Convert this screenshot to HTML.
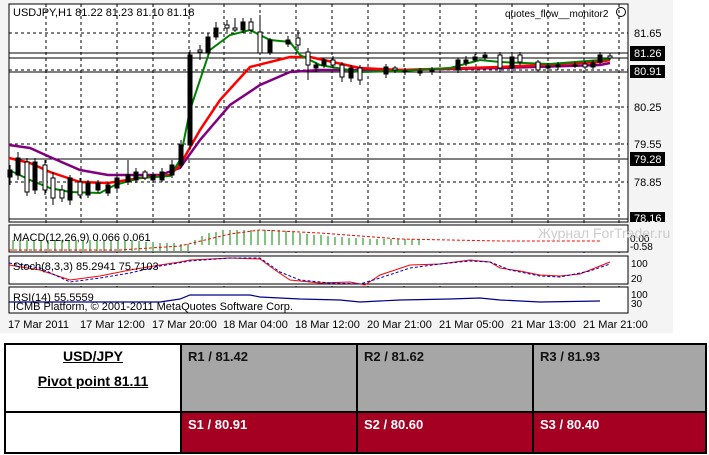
<!DOCTYPE html><html><head><meta charset="utf-8"><style>
body{margin:0;width:709px;height:455px;background:#fff;overflow:hidden;font-family:"Liberation Sans",sans-serif;position:relative}
svg text{font-family:"Liberation Sans",sans-serif}
table{position:absolute;left:4px;top:343px;border-collapse:collapse;width:703px}
td{border:2px solid #000;vertical-align:top;font-weight:bold;font-size:13px;padding:4px 6px;}
.g{background:#a6a6a6;color:#111}.r{background:#a50021;color:#fff}
</style></head><body>
<svg width="709" height="340" style="position:absolute;left:0;top:0" xmlns="http://www.w3.org/2000/svg">
<rect x="0" y="0" width="673" height="333" fill="#f4f4f4"/>
<rect x="9" y="4" width="619" height="218" fill="#fff"/>
<g stroke="#000" stroke-dasharray="3,3" stroke-width="1">
<line x1="46" y1="4" x2="46" y2="313"/><line x1="81" y1="4" x2="81" y2="313"/><line x1="117" y1="4" x2="117" y2="313"/><line x1="153" y1="4" x2="153" y2="313"/><line x1="189" y1="4" x2="189" y2="313"/><line x1="224" y1="4" x2="224" y2="313"/><line x1="260" y1="4" x2="260" y2="313"/><line x1="296" y1="4" x2="296" y2="313"/><line x1="332" y1="4" x2="332" y2="313"/><line x1="368" y1="4" x2="368" y2="313"/><line x1="404" y1="4" x2="404" y2="313"/><line x1="440" y1="4" x2="440" y2="313"/><line x1="476" y1="4" x2="476" y2="313"/><line x1="512" y1="4" x2="512" y2="313"/><line x1="548" y1="4" x2="548" y2="313"/><line x1="584" y1="4" x2="584" y2="313"/><line x1="619" y1="4" x2="619" y2="313"/>
<line x1="9" y1="33" x2="628" y2="33"/><line x1="9" y1="70" x2="628" y2="70"/><line x1="9" y1="107" x2="628" y2="107"/><line x1="9" y1="144" x2="628" y2="144"/><line x1="9" y1="182" x2="628" y2="182"/>
</g>
<g stroke="#000" fill="none"><rect x="9" y="4" width="619" height="218"/>
<line x1="9" y1="53" x2="628" y2="53"/><line x1="9" y1="58" x2="628" y2="58"/><line x1="9" y1="72" x2="628" y2="72"/><line x1="9" y1="159" x2="628" y2="159"/><line x1="9" y1="219" x2="628" y2="219"/></g>
<polyline fill="none" stroke="#800080" stroke-width="2.5" points="9,145 30,148 50,157 80,170 108,175 160,175 180,168 200,140 230,105 260,85 290,72 320,70 400,70 500,68 600,65 610,63"/>
<polyline fill="none" stroke="#f00" stroke-width="2.5" points="9,158 30,163 50,172 80,182 108,183 140,178 170,175 180,165 200,130 220,100 250,67 290,57 310,57 360,68 400,70 500,67 600,62 610,60"/>
<polyline fill="none" stroke="#008000" stroke-width="2" points="9,170 30,180 50,188 70,192 100,193 115,185 140,178 170,176 180,160 190,110 210,50 230,35 250,30 270,40 290,42 300,55 320,65 360,72 400,71 450,68 480,60 500,62 550,64 600,60 610,59"/>
<g stroke="#000" stroke-width="1">
<path d="M10 165V185M18 152V180M27 158V196M35 158V194M45 160V195M53 172V205M62 185V202M70 175V205M80 178V198M88 180V198M98 180V193M108 182V196M117 175V190M128 160V185M136 168V183M145 170V180M153 172V183M162 168V182M172 160V178M181 140V168M190 50V150M200 45V60M208 33V55M216 22V40M227 20V32M235 18V32M243 18V33M251 18V32M260 15V55M270 38V55M288 36V47M298 30V50M308 48V80M316 62V72M324 58V68M333 56V68M342 62V82M351 65V82M360 65V85M386 64V78M395 66V73M405 68V75M420 68V76M432 67V75M458 58V73M466 56V66M475 54V62M485 52V60M500 52V72M512 54V72M520 52V65M538 60V72M548 63V71M558 62V70M575 62V68M585 61V69M593 60V69M600 52V64M610 53V60"/>
</g>
<g stroke="#000" stroke-width="1" fill="#000">
<rect x="8" y="170" width="4" height="7"/><rect x="16" y="158" width="4" height="17"/><rect x="33" y="162" width="4" height="28"/><rect x="68" y="178" width="4" height="22"/><rect x="86" y="183" width="4" height="12"/><rect x="96" y="183" width="4" height="7"/><rect x="106" y="185" width="4" height="8"/><rect x="115" y="178" width="4" height="10"/><rect x="126" y="175" width="4" height="7"/><rect x="134" y="172" width="4" height="8"/><rect x="151" y="175" width="4" height="5"/><rect x="160" y="172" width="4" height="8"/><rect x="170" y="165" width="4" height="10"/><rect x="179" y="145" width="4" height="20"/><rect x="188" y="55" width="4" height="90"/><rect x="206" y="37" width="4" height="16"/><rect x="214" y="28" width="4" height="9"/><rect x="241" y="22" width="4" height="8"/><rect x="268" y="40" width="4" height="13"/><rect x="286" y="40" width="4" height="4"/><rect x="314" y="65" width="4" height="3"/><rect x="322" y="60" width="4" height="5"/><rect x="349" y="68" width="4" height="10"/><rect x="384" y="67" width="4" height="7"/><rect x="403" y="71" width="4" height="1"/><rect x="418" y="71" width="4" height="2"/><rect x="430" y="70" width="4" height="2"/><rect x="456" y="60" width="4" height="10"/><rect x="464" y="60" width="4" height="3"/><rect x="473" y="57" width="4" height="3"/><rect x="483" y="55" width="4" height="3"/><rect x="510" y="57" width="4" height="11"/><rect x="546" y="66" width="4" height="2"/><rect x="556" y="65" width="4" height="2"/><rect x="573" y="65" width="4" height="1"/><rect x="591" y="63" width="4" height="4"/><rect x="598" y="55" width="4" height="7"/>
</g>
<g stroke="#000" stroke-width="1" fill="#fff">
<rect x="25" y="162" width="4" height="30"/><rect x="43" y="165" width="4" height="25"/><rect x="51" y="178" width="4" height="20"/><rect x="60" y="190" width="4" height="8"/><rect x="78" y="182" width="4" height="13"/><rect x="143" y="172" width="4" height="6"/><rect x="198" y="50" width="4" height="2"/><rect x="225" y="25" width="4" height="3"/><rect x="233" y="28" width="4" height="2"/><rect x="249" y="22" width="4" height="8"/><rect x="258" y="32" width="4" height="21"/><rect x="296" y="38" width="4" height="7"/><rect x="306" y="52" width="4" height="13"/><rect x="331" y="60" width="4" height="5"/><rect x="340" y="65" width="4" height="12"/><rect x="358" y="68" width="4" height="12"/><rect x="393" y="68" width="4" height="2"/><rect x="498" y="55" width="4" height="13"/><rect x="518" y="55" width="4" height="7"/><rect x="536" y="62" width="4" height="8"/><rect x="583" y="64" width="4" height="3"/><rect x="608" y="56" width="4" height="2"/>
</g>
<text x="13" y="16" font-size="11">USDJPY,H1  81.22 81.23 81.10 81.18</text>
<text x="505" y="17" font-size="10">quotes_flow__monitor2</text>
<circle cx="621" cy="12" r="4.5" fill="none" stroke="#000"/>
<g font-size="11" fill="#000"><text x="634" y="37">81.65</text><text x="634" y="111">80.25</text><text x="634" y="148">79.55</text><text x="634" y="186">78.85</text></g>
<rect x="630" y="46" width="35" height="15" fill="#000"/><rect x="630" y="65" width="35" height="13" fill="#000"/><rect x="630" y="152" width="35" height="14" fill="#000"/><rect x="630" y="212" width="35" height="10" fill="#000"/>
<g font-size="11" fill="#fff"><text x="634" y="57">81.26</text><text x="634" y="75">80.91</text><text x="634" y="163">79.28</text><text x="634" y="222">78.16</text></g>
<rect x="9" y="225" width="619" height="27" fill="#fff" stroke="#000"/>
<g stroke="#080" stroke-width="1"><path d="M13 240V251M20 240V251M27 240V251M34 240V251M41 240V251M48 240V251M55 240V251M62 240V251M69 240V251M76 240V251M83 240V251M90 240V251M97 240V251M104 240V251M111 240V251M118 240V251M125 240V251M132 240V251M139 241V251M146 242V251M153 242V251M160 243V251M167 243V251M174 243V251M181 244V251M188 244V251M195 240V245M202 236V245M209 233V245M216 232V245M223 230V245M230 230V245M237 230V245M244 230V245M251 230V245M258 230V245M265 230V245M272 230V245M279 230V245M286 231V245M293 232V245M300 233V245M307 234V245M314 235V245M321 235V245M328 236V245M335 237V245M342 237V245M349 238V245M356 238V245M363 238V245M370 239V245M377 239V245M384 239V245M391 239V245M398 239V245M405 239V245M412 239V245M419 239V245"/></g>
<polyline fill="none" stroke="#f00" stroke-dasharray="3,2" points="9,250 120,250 180,246 230,234 260,230 320,233 400,239 500,241 600,241"/>
<text x="13" y="241" font-size="11">MACD(12,26,9) 0.066 0.061</text>
<text x="630" y="242" font-size="10">0.00</text><text x="630" y="250" font-size="10">-0.58</text>
<rect x="9" y="256" width="619" height="28" fill="#fff" stroke="#000"/>
<polyline fill="none" stroke="#f00" points="9,265 40,270 70,280 100,276 130,270 160,265 180,262 190,260 230,258 260,259 275,270 290,280 320,283 350,282 365,285 380,275 410,265 440,264 470,260 490,262 500,268 520,271 540,275 560,276 580,274 600,266 610,262"/>
<polyline fill="none" stroke="#00c" stroke-dasharray="3,2" points="9,263 40,268 70,282 100,278 130,273 160,266 190,261 230,258 260,258 280,272 300,280 330,283 360,284 380,278 410,268 440,264 470,261 490,262 510,270 540,276 560,277 590,271 610,264"/>
<text x="13" y="270" font-size="11">Stoch(8,3,3) 85.2941 75.7103</text>
<text x="631" y="267" font-size="10">100</text><text x="631" y="282" font-size="10">20</text>
<rect x="9" y="287" width="619" height="26" fill="#fff" stroke="#000"/>
<polyline fill="none" stroke="#00008b" stroke-width="1.2" points="9,302 160,302 180,299 190,295 250,295 260,297 300,299 340,300 360,302 400,300 450,299 480,298 500,300 540,302 600,301"/>
<text x="13" y="301" font-size="11">RSI(14) 55.5559</text>
<text x="13" y="310" font-size="11">ICMB Platform, © 2001-2011 MetaQuotes Software Corp.</text>
<text x="631" y="298" font-size="10">100</text><text x="631" y="307" font-size="10">30</text>
<text x="538" y="238" font-size="14" fill="#ccc">Журнал ForTrader.ru</text>
<g font-size="11"><text x="8" y="328">17 Mar 2011</text><text x="80" y="328">17 Mar 12:00</text><text x="152" y="328">17 Mar 20:00</text><text x="223" y="328">18 Mar 04:00</text><text x="295" y="328">18 Mar 12:00</text><text x="367" y="328">20 Mar 21:00</text><text x="439" y="328">21 Mar 05:00</text><text x="511" y="328">21 Mar 13:00</text><text x="583" y="328">21 Mar 21:00</text></g>
</svg>
<table><tr style="height:68px">
<td style="width:162px;text-align:center;padding-top:3px"><u style="font-size:14px">USD/JPY</u><br><div style="height:9px"></div><u style="font-size:14px">Pivot point 81.11</u></td>
<td class="g" style="width:162px">R1 / 81.42</td><td class="g" style="width:162px">R2 / 81.62</td><td class="g">R3 / 81.93</td></tr>
<tr style="height:41px"><td></td><td class="r">S1 / 80.91</td><td class="r">S2 / 80.60</td><td class="r">S3 / 80.40</td></tr></table>
</body></html>
